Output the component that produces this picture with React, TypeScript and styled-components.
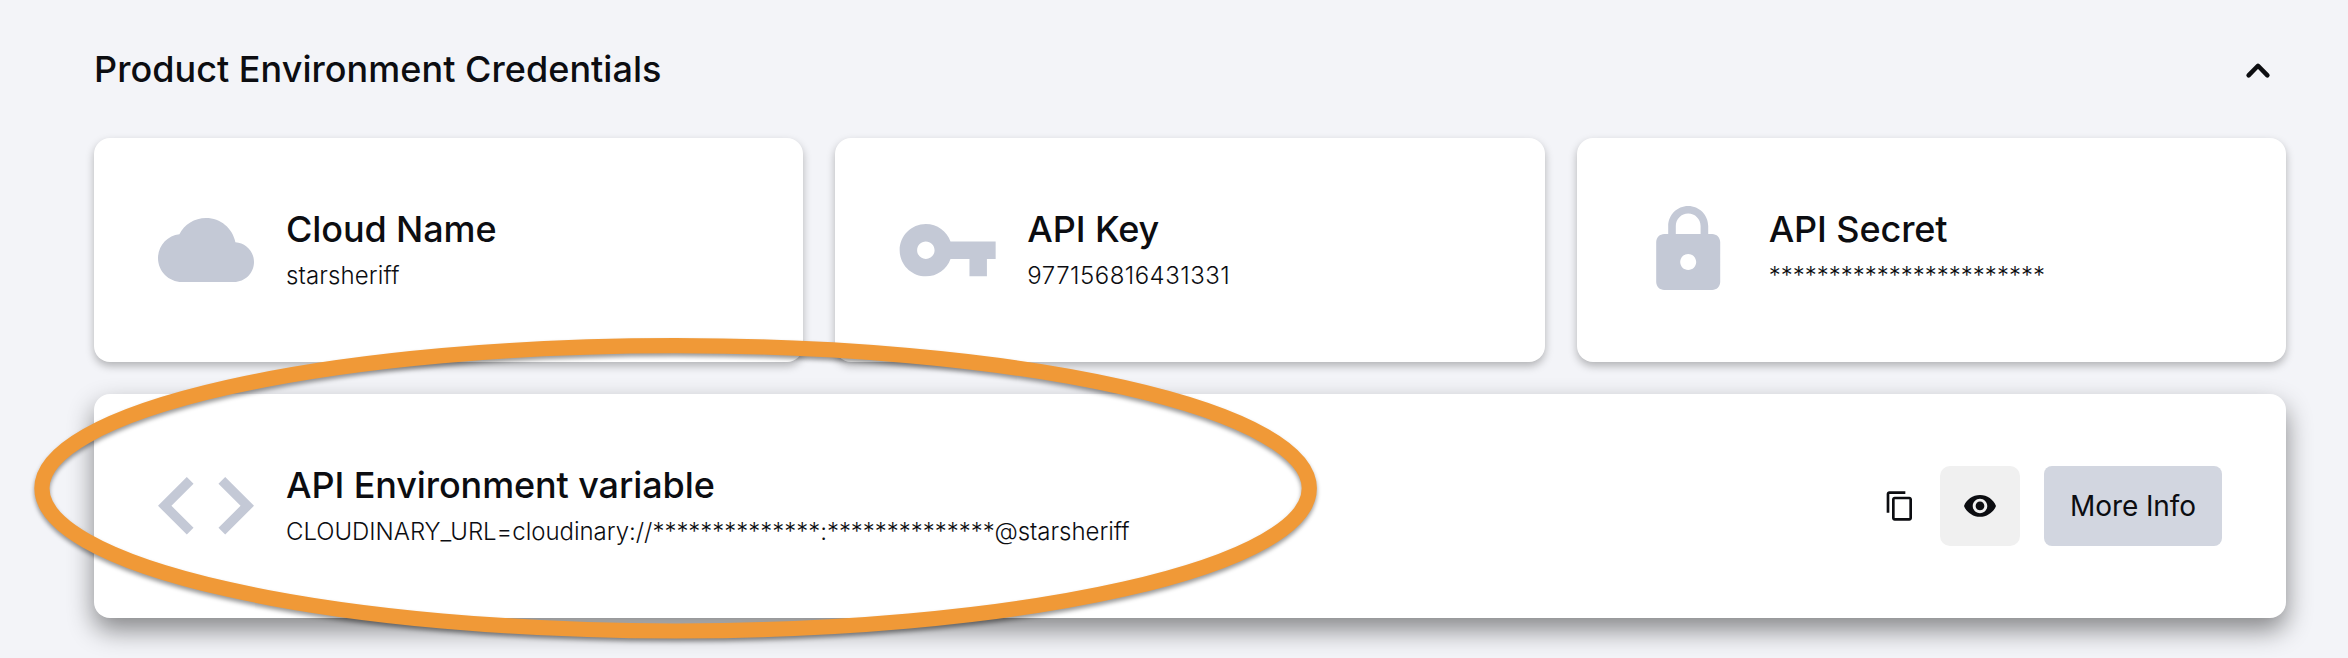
import React from "react";
import styled, { createGlobalStyle } from "styled-components";

const GlobalStyle = createGlobalStyle`
  * { box-sizing: border-box; }
  body {
    margin: 0;
    background: #f3f4f8;
    font-family: Inter, "Liberation Sans", sans-serif;
    color: #0c0d11;
  }
`;

const Page = styled.main`
  position: relative;
  height: 658px;
  padding: 0 62px 0 94px;
  overflow: hidden;
`;

const Header = styled.header`
  display: flex;
  align-items: center;
  justify-content: space-between;
  height: 138px;
  padding: 2px 12px 0 0;
`;

const Heading = styled.h2`
  margin: 0;
  padding-bottom: 2px;
  font-size: 36px;
  line-height: 44px;
  font-weight: 500;
  letter-spacing: 0.03px;
`;

const CollapseButton = styled.button`
  display: flex;
  align-items: center;
  justify-content: center;
  width: 32px;
  height: 32px;
  padding: 0;
  border: 0;
  background: none;
  color: inherit;
`;

const CardGrid = styled.div`
  display: grid;
  grid-template-columns: repeat(3, 1fr);
  gap: 32px;
`;

const Card = styled.section<{ $raised?: boolean }>`
  display: flex;
  align-items: center;
  gap: 32px;
  height: 224px;
  padding: 0 64px;
  border-radius: 16px;
  background: #fff;
  grid-column: ${(p) => (p.$raised ? "1 / -1" : "auto")};
  box-shadow: ${(p) =>
    p.$raised ? "0 12px 26px rgba(0, 0, 0, 0.45)" : "0 4px 8px rgba(0, 0, 0, 0.27)"};
`;

const IconSlot = styled.div`
  display: flex;
  flex: none;
  align-items: center;
  justify-content: center;
  width: 96px;
  height: 96px;
  color: #c4c9d6;
`;

const CardText = styled.div`
  flex: 1;
  padding-top: 1px;
`;

const CardTitle = styled.h3`
  margin: 0;
  font-size: 36px;
  line-height: 44px;
  font-weight: 500;
  letter-spacing: -0.1px;
`;

const CardValue = styled.p<{ $tracking: number }>`
  margin: 7px 0 0;
  font-size: 24px;
  line-height: 36px;
  font-weight: 300;
  letter-spacing: ${(p) => p.$tracking}px;
  white-space: nowrap;
`;

const Actions = styled.div`
  display: flex;
  align-items: center;
  gap: 24px;
`;

const IconButton = styled.button<{ $filled?: boolean }>`
  display: flex;
  align-items: center;
  justify-content: center;
  width: ${(p) => (p.$filled ? "80px" : "32px")};
  height: 80px;
  padding: 0;
  border: 0;
  border-radius: 10px;
  background: ${(p) => (p.$filled ? "#f0f0f0" : "none")};
  color: inherit;
`;

const InfoButton = styled.button`
  width: 178px;
  height: 80px;
  padding: 0;
  border: 0;
  border-radius: 8px;
  background: #d2d6e0;
  color: inherit;
  font-family: inherit;
  font-size: 28px;
  font-weight: 400;
  letter-spacing: -0.1px;
`;

const Highlight = styled.svg`
  position: absolute;
  left: 0;
  top: 0;
  pointer-events: none;
  filter: drop-shadow(0 3px 2px rgba(0, 0, 0, 0.4));
`;

const CloudIcon = () => (
  <svg width="96" height="96" viewBox="0 0 24 24" fill="currentColor">
    <path d="M19.35 10.04C18.67 6.59 15.64 4 12 4 9.11 4 6.6 5.64 5.35 8.04 2.34 8.36 0 10.91 0 14c0 3.31 2.69 6 6 6h13c2.76 0 5-2.24 5-5 0-2.64-2.05-4.78-4.65-4.96z" />
  </svg>
);

const KeyIcon = () => (
  <svg width="96" height="52.36" viewBox="0.85 6 22 12" fill="currentColor" overflow="visible">
    <path d="M12.65 10C11.83 7.67 9.61 6 7 6c-3.31 0-6 2.69-6 6s2.69 6 6 6c2.61 0 4.83-1.67 5.65-4H17v4h4v-4h2v-4H12.65zM7 14c-1.1 0-2-.9-2-2s.9-2 2-2 2 .9 2 2-.9 2-2 2z" />
  </svg>
);

const LockIcon = () => (
  <svg width="96" height="96" viewBox="0.2 0 24 24" fill="currentColor">
    <path d="M18 8h-1V6c0-2.76-2.24-5-5-5S7 3.24 7 6v2H6c-1.1 0-2 .9-2 2v10c0 1.1.9 2 2 2h12c1.1 0 2-.9 2-2V10c0-1.1-.9-2-2-2zm-6 9c-1.1 0-2-.9-2-2s.9-2 2-2 2 .9 2 2-.9 2-2 2zm3.1-9H8.9V6c0-1.71 1.39-3.1 3.1-3.1 1.71 0 3.1 1.39 3.1 3.1v2z" />
  </svg>
);

const CodeIcon = () => (
  <svg width="96" height="57.6" viewBox="2 6 20 12" fill="currentColor">
    <path d="M9.4 16.6L4.8 12l4.6-4.6L8 6l-6 6 6 6 1.4-1.4zm5.2 0l4.6-4.6-4.6-4.6L16 6l6 6-6 6-1.4-1.4z" />
  </svg>
);

const CopyIcon = () => (
  <svg width="32" height="32" viewBox="0 0 24 24" fill="currentColor">
    <path d="M16 1H4c-1.1 0-2 .9-2 2v14h2V3h12V1zm3 4H8c-1.1 0-2 .9-2 2v14c0 1.1.9 2 2 2h11c1.1 0 2-.9 2-2V7c0-1.1-.9-2-2-2zm0 16H8V7h11v14z" />
  </svg>
);

const EyeIcon = () => (
  <svg width="32" height="21.82" viewBox="1 4.5 22 15" fill="currentColor">
    <path d="M12 4.5C7 4.5 2.73 7.61 1 12c1.73 4.39 6 7.5 11 7.5s9.27-3.11 11-7.5c-1.73-4.39-6-7.5-11-7.5zM12 17c-2.76 0-5-2.24-5-5s2.24-5 5-5 5 2.24 5 5-2.24 5-5 5zm0-8c-1.66 0-3 1.34-3 3s1.34 3 3 3 3-1.34 3-3-1.34-3-3-3z" />
  </svg>
);

const ChevronUpIcon = () => (
  <svg
    width="32"
    height="32"
    viewBox="0 0 32 32"
    fill="none"
    stroke="currentColor"
    strokeWidth="4.5"
    strokeLinecap="round"
    strokeLinejoin="round"
  >
    <path d="M6.6 21.4 16 11.8l9.4 9.6" />
  </svg>
);

interface CredentialCardProps {
  icon: React.ReactNode;
  title: string;
  value: string;
  tracking?: number;
  raised?: boolean;
  children?: React.ReactNode;
}

const CredentialCard = ({ icon, title, value, tracking = 0, raised, children }: CredentialCardProps) => (
  <Card $raised={raised}>
    <IconSlot>{icon}</IconSlot>
    <CardText>
      <CardTitle>{title}</CardTitle>
      <CardValue $tracking={tracking}>{value}</CardValue>
    </CardText>
    {children}
  </Card>
);

export default function App() {
  return (
    <Page>
      <GlobalStyle />
      <Header>
        <Heading>Product Environment Credentials</Heading>
        <CollapseButton aria-label="Collapse">
          <ChevronUpIcon />
        </CollapseButton>
      </Header>
      <CardGrid>
        <CredentialCard icon={<CloudIcon />} title="Cloud Name" value="starsheriff" tracking={0.12} />
        <CredentialCard icon={<KeyIcon />} title="API Key" value="977156816431331" tracking={0.48} />
        <CredentialCard icon={<LockIcon />} title="API Secret" value={"*".repeat(23)} />
        <CredentialCard
          raised
          icon={<CodeIcon />}
          title="API Environment variable"
          value={`CLOUDINARY_URL=cloudinary://${"*".repeat(14)}:${"*".repeat(14)}@starsheriff`}
          tracking={-0.03}
        >
          <Actions>
            <IconButton aria-label="Copy">
              <CopyIcon />
            </IconButton>
            <IconButton $filled aria-label="Reveal">
              <EyeIcon />
            </IconButton>
            <InfoButton>More Info</InfoButton>
          </Actions>
        </CredentialCard>
      </CardGrid>
      <Highlight width="1360" height="658" viewBox="0 0 1360 658">
        <ellipse cx="675.6" cy="488.3" rx="633.7" ry="142.7" fill="none" stroke="#f09937" strokeWidth="15.2" />
      </Highlight>
    </Page>
  );
}
